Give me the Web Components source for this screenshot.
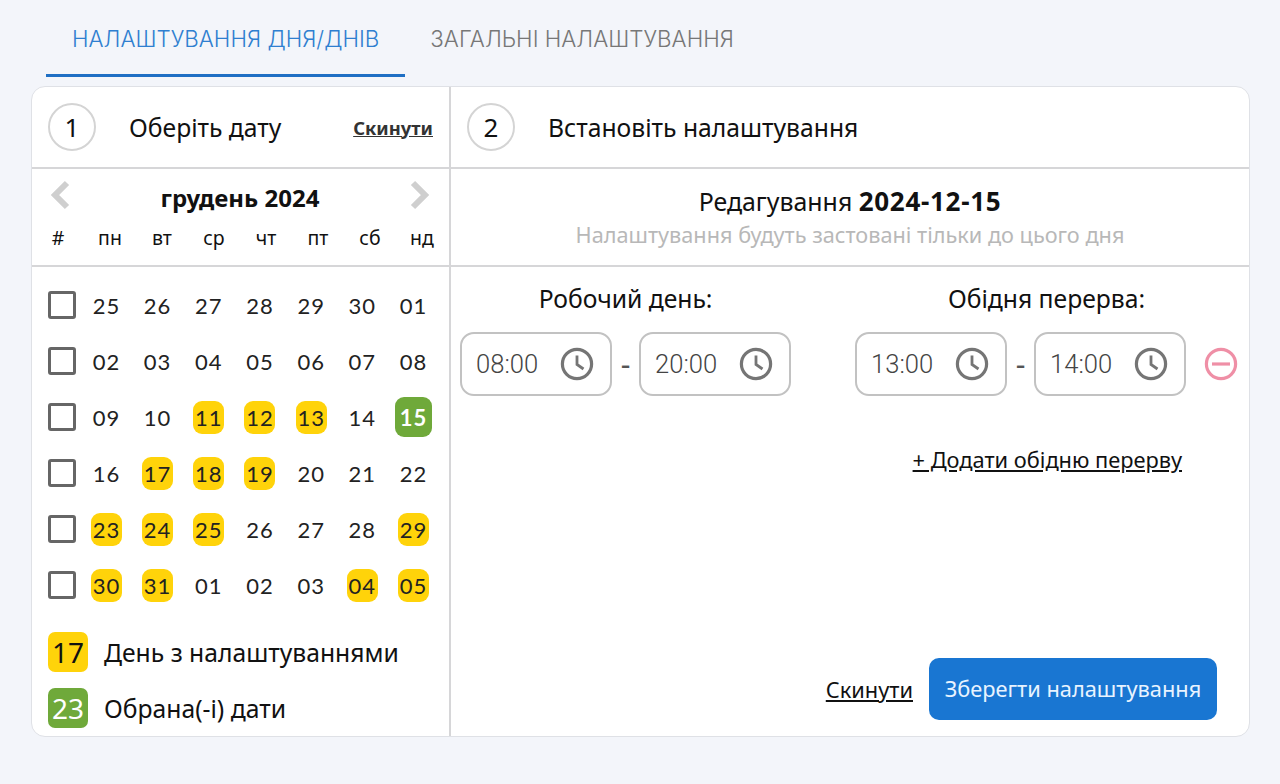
<!DOCTYPE html>
<html lang="uk">
<head>
<meta charset="utf-8">
<title>Налаштування</title>
<style>
    html, body { margin: 0; height: 100%; }
    body {
        background: #f3f5fa;
        color: #111;
        font-family: "Noto Sans", Roboto, sans-serif;
        overflow: hidden;
    }
</style>
</head>
<body>
<settings-page></settings-page>

<script>
const CLOCK = `<svg width="34" height="34" viewBox="0 0 34 34" fill="none" stroke="#757575">
    <circle cx="17" cy="17" r="14.6" stroke-width="3.2"/>
    <path d="M17 8.5V17.5L23.5 22" stroke-width="2.8"/>
</svg>`;

class StepHeader extends HTMLElement {
    constructor() {
        super();
        this.attachShadow({ mode: 'open' });
        this.shadowRoot.innerHTML = `
            <style>
                :host {
                    display: flex;
                    align-items: center;
                    height: 82px;
                    padding: 0 16px;
                    box-sizing: border-box;
                    border-bottom: 2px solid #d6d6d8;
                    font-size: 24.7px;
                }
                .num {
                    width: 48px;
                    height: 48px;
                    box-sizing: border-box;
                    border: 2px solid #d4d4d4;
                    border-radius: 50%;
                    display: flex;
                    align-items: center;
                    justify-content: center;
                    font-size: 26px;
                    flex: none;
                    margin-right: 33px;
                }
                .title { flex: 1; }
            </style>
            <div class="num">${this.getAttribute('num')}</div>
            <div class="title"><slot></slot></div>
            <slot name="action"></slot>
        `;
    }
}

class TabBar extends HTMLElement {
    constructor() {
        super();
        this.attachShadow({ mode: 'open' });
        this.shadowRoot.innerHTML = `
            <style>
                :host {
                    display: flex;
                    padding-left: 46px;
                    height: 77px;
                    font-family: Inter, sans-serif;
                    font-size: 22.35px;
                    font-weight: 300;
                }
                .tab {
                    padding: 25px 26px 0 25px;
                    box-sizing: border-box;
                    white-space: nowrap;
                    color: #777;
                }
                .active {
                    padding-left: 26px;
                    color: #2f7fd0;
                    border-bottom: 3px solid #1f6fc4;
                }
            </style>
            <div class="tab active">НАЛАШТУВАННЯ ДНЯ/ДНІВ</div>
            <div class="tab">ЗАГАЛЬНІ НАЛАШТУВАННЯ</div>
        `;
    }
}

class CalendarPanel extends HTMLElement {
    constructor() {
        super();
        this.attachShadow({ mode: 'open' });
        const rows = [
            ['25', '26', '27', '28', '29', '30', '01'],
            ['02', '03', '04', '05', '06', '07', '08'],
            ['09', '10', 'y11', 'y12', 'y13', '14', 'g15'],
            ['16', 'y17', 'y18', 'y19', '20', '21', '22'],
            ['y23', 'y24', 'y25', '26', '27', '28', 'y29'],
            ['y30', 'y31', '01', '02', '03', 'y04', 'y05']
        ];
        const cell = (d) => {
            if (d[0] === 'y') return `<div class="day"><span class="mark">${d.slice(1)}</span></div>`;
            if (d[0] === 'g') return `<div class="day"><span class="sel">${d.slice(1)}</span></div>`;
            return `<div class="day">${d}</div>`;
        };
        this.shadowRoot.innerHTML = `
            <style>
                :host {
                    display: flex;
                    flex-direction: column;
                    width: 417px;
                    flex: none;
                    border-right: 2px solid #d6d6d8;
                }
                .head {
                    height: 98px;
                    box-sizing: border-box;
                    border-bottom: 2px solid #d6d6d8;
                }
                .month {
                    display: flex;
                    align-items: center;
                    justify-content: space-between;
                    padding: 11px 18px 0 17px;
                    height: 40px;
                    box-sizing: border-box;
                    font-size: 24px;
                    font-weight: 700;
                    margin-bottom: 16px;
                }
                .month span { margin-top: 6px; }
                .week {
                    display: grid;
                    grid-template-columns: repeat(8, 52px);
                    font-size: 19.5px;
                    line-height: 26px;
                    text-align: center;
                }
                .rows {
                    display: grid;
                    grid-template-columns: 48.8px repeat(7, 51.2px);
                    grid-auto-rows: 56px;
                    padding-top: 10px;
                    align-items: center;
                    font-family: Lato, sans-serif;
                    font-size: 22px;
                    letter-spacing: 1px;
                    color: #222;
                }
                .check {
                    width: 28px;
                    height: 28px;
                    box-sizing: border-box;
                    border: 3px solid #666;
                    border-radius: 3px;
                    margin-left: 16px;
                }
                .day {
                    display: flex;
                    align-items: center;
                    justify-content: center;
                    text-align: center;
                }
                .mark, .sel {
                    display: flex;
                    align-items: center;
                    justify-content: center;
                    border-radius: 9px;
                }
                .mark {
                    width: 31px;
                    height: 33px;
                    background: #ffd30a;
                }
                .sel {
                    width: 37px;
                    height: 40px;
                    background: #6fa93a;
                    color: #fff;
                    font-weight: 700;
                }
                .legend {
                    display: flex;
                    flex-direction: column;
                    gap: 16px;
                    padding: 19px 0 0 16px;
                    font-size: 24.7px;
                }
                .item {
                    display: flex;
                    align-items: center;
                    gap: 16px;
                }
                .swatch {
                    width: 40px;
                    height: 40px;
                    border-radius: 7px;
                    display: flex;
                    align-items: center;
                    justify-content: center;
                    font-size: 28px;
                }
            </style>
            <div class="head">
                <div class="month">
                    <svg width="24" height="30" viewBox="0 0 24 30" fill="none" stroke="#cfcfcf" stroke-width="6"><path d="M18 3L6 15L18 27"/></svg>
                    <span>грудень 2024</span>
                    <svg width="24" height="30" viewBox="0 0 24 30" fill="none" stroke="#cfcfcf" stroke-width="6"><path d="M6 3L18 15L6 27"/></svg>
                </div>
                <div class="week">
                    <span>#</span><span>пн</span><span>вт</span><span>ср</span><span>чт</span><span>пт</span><span>сб</span><span>нд</span>
                </div>
            </div>
            <div class="rows">
                ${rows.map((r) => `<div class="check"></div>${r.map(cell).join('')}`).join('')}
            </div>
            <div class="legend">
                <div class="item"><span class="swatch" style="background:#ffd30a">17</span>День з налаштуваннями</div>
                <div class="item"><span class="swatch" style="background:#6fa93a;color:#fff">23</span>Обрана(-і) дати</div>
            </div>
        `;
    }
}

class TimeInput extends HTMLElement {
    constructor() {
        super();
        this.attachShadow({ mode: 'open' });
        this.shadowRoot.innerHTML = `
            <style>
                :host {
                    display: flex;
                    align-items: center;
                    justify-content: space-between;
                    width: 152px;
                    height: 64px;
                    box-sizing: border-box;
                    padding: 0 16px 0 14px;
                    border: 2px solid #c2c2c2;
                    border-radius: 14px;
                    font-family: Roboto, sans-serif;
                    font-size: 25.6px;
                    font-weight: 300;
                    color: #444;
                }
            </style>
            <span><slot></slot></span>
            ${CLOCK}
        `;
    }
}

class TimeRange extends HTMLElement {
    constructor() {
        super();
        this.attachShadow({ mode: 'open' });
        this.shadowRoot.innerHTML = `
            <style>
                :host {
                    display: flex;
                    flex-direction: column;
                }
                .label {
                    font-size: 24.7px;
                    text-align: center;
                    height: 50px;
                    line-height: 34px;
                }
                .inputs {
                    display: flex;
                    align-items: center;
                }
                .dash {
                    width: 27px;
                    text-align: center;
                    font-size: 30px;
                    line-height: 34px;
                    color: #555;
                }
            </style>
            <div class="label">${this.getAttribute('label')}</div>
            <div class="inputs">
                <time-input>${this.getAttribute('from')}</time-input>
                <span class="dash">-</span>
                <time-input>${this.getAttribute('to')}</time-input>
                <slot></slot>
            </div>
        `;
    }
}

class SettingsPanel extends HTMLElement {
    constructor() {
        super();
        this.attachShadow({ mode: 'open' });
        this.shadowRoot.innerHTML = `
            <style>
                :host {
                    display: flex;
                    flex-direction: column;
                    flex: 1;
                    min-width: 0;
                }
                .edit {
                    height: 98px;
                    box-sizing: border-box;
                    border-bottom: 2px solid #d6d6d8;
                    text-align: center;
                    padding-top: 14px;
                }
                .edit h2 {
                    margin: 0;
                    font-size: 24.9px;
                    font-weight: 400;
                    line-height: 36px;
                }
                .edit b {
                    font-size: 26px;
                    letter-spacing: .7px;
                }
                .edit p {
                    margin: 0;
                    font-size: 21.7px;
                    line-height: 32px;
                    color: #b8b8b8;
                }
                .times {
                    display: flex;
                    gap: 64px;
                    padding: 15px 0 0 9px;
                }
                .remove {
                    margin-left: 18px;
                    display: block;
                }
                .add {
                    align-self: flex-end;
                    margin: 47px 67px 0 0;
                    font-size: 21.8px;
                    line-height: 34px;
                    text-decoration: underline;
                }
                .foot {
                    margin-top: auto;
                    display: flex;
                    align-items: center;
                    justify-content: flex-end;
                    gap: 16px;
                    padding: 0 32px 16px 0;
                    font-size: 21.8px;
                }
                .foot u { text-decoration: underline; }
                button {
                    width: 288px;
                    height: 62px;
                    padding: 0 0 2px;
                    border: 0;
                    border-radius: 10px;
                    background: #1976d2;
                    color: #e8f3ff;
                    font: inherit;
                }
            </style>
            <div class="edit">
                <h2>Редагування <b>2024-12-15</b></h2>
                <p>Налаштування будуть застовані тільки до цього дня</p>
            </div>
            <div class="times">
                <time-range label="Робочий день:" from="08:00" to="20:00"></time-range>
                <time-range label="Обідня перерва:" from="13:00" to="14:00">
                    <svg class="remove" width="34" height="34" viewBox="0 0 34 34" fill="none" stroke="#ef8fa6" stroke-width="3.2">
                        <circle cx="17" cy="17" r="14.6"/>
                        <path d="M8 17H26"/>
                    </svg>
                </time-range>
            </div>
            <div class="add">+ Додати обідню перерву</div>
            <div class="foot">
                <u>Скинути</u>
                <button>Зберегти налаштування</button>
            </div>
        `;
    }
}

class SettingsPage extends HTMLElement {
    constructor() {
        super();
        this.attachShadow({ mode: 'open' });
        this.shadowRoot.innerHTML = `
            <style>
                :host { display: block; }
                .card {
                    margin: 9px 30px 0 31px;
                    height: 651px;
                    box-sizing: border-box;
                    background: #fff;
                    border: 1px solid #dfe1e6;
                    border-radius: 14px;
                    overflow: hidden;
                    display: flex;
                    flex-direction: column;
                }
                .top { display: flex; }
                .top step-header:first-child {
                    width: 419px;
                    flex: none;
                    border-right: 2px solid #d6d6d8;
                }
                .top step-header:last-child { flex: 1; }
                .body { display: flex; flex: 1; min-height: 0; }
                .reset {
                    font-size: 18.4px;
                    font-weight: 700;
                    text-decoration: underline;
                    color: #333;
                }
            </style>
            <tab-bar></tab-bar>
            <div class="card">
                <div class="top">
                    <step-header num="1">Оберіть дату<span slot="action" class="reset">Скинути</span></step-header>
                    <step-header num="2">Встановіть налаштування</step-header>
                </div>
                <div class="body">
                    <calendar-panel></calendar-panel>
                    <settings-panel></settings-panel>
                </div>
            </div>
        `;
    }
}

customElements.define('step-header', StepHeader);
customElements.define('tab-bar', TabBar);
customElements.define('calendar-panel', CalendarPanel);
customElements.define('time-input', TimeInput);
customElements.define('time-range', TimeRange);
customElements.define('settings-panel', SettingsPanel);
customElements.define('settings-page', SettingsPage);
</script>
</body>
</html>
